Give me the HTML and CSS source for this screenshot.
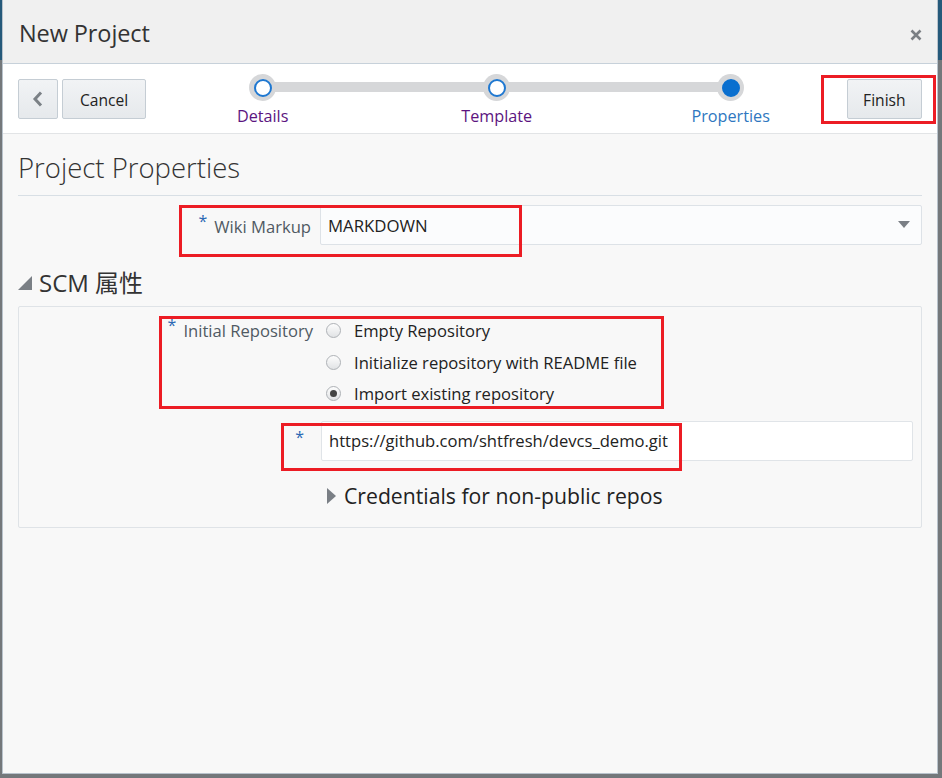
FILE: index.html
```html
<!DOCTYPE html>
<html lang="en">
<head>
<meta charset="utf-8">
<title>New Project</title>
<link rel="stylesheet" href="styles.css">
</head>
<body>
<div class="dialog">
  <header class="dlg-header">
    <h1 class="dlg-title">New Project</h1>
    <button class="close" aria-label="Close">
      <svg width="12" height="12" viewBox="0 0 12 12"><path d="M1.5 1.5 L10.5 10.5 M10.5 1.5 L1.5 10.5" stroke="#7b7f84" stroke-width="2.6" fill="none"/></svg>
    </button>
  </header>

  <div class="toolbar">
    <button class="btn btn-back" aria-label="Back">
      <svg width="12" height="16" viewBox="0 0 12 16"><path d="M9 1.5 L3 8 L9 14.5" stroke="#7b8186" stroke-width="3" fill="none"/></svg>
    </button>
    <button class="btn btn-cancel">Cancel</button>
    <ol class="train">
      <li class="step"><span class="dot"><span class="dot-inner"></span></span><span class="step-label">Details</span></li>
      <li class="step"><span class="dot"><span class="dot-inner"></span></span><span class="step-label">Template</span></li>
      <li class="step current"><span class="dot"><span class="dot-inner"></span></span><span class="step-label">Properties</span></li>
    </ol>
    <button class="btn btn-finish">Finish</button>
  </div>

  <main class="content">
    <h2 class="page-title">Project Properties</h2>

    <div class="form-row wiki-row">
      <label class="lbl"><span class="req">*</span>Wiki Markup</label>
      <div class="select">
        <span>MARKDOWN</span>
        <svg width="12" height="8" viewBox="0 0 12 8"><path d="M0 0 H12 L6 7 Z" fill="#7a7f85"/></svg>
      </div>
    </div>

    <h3 class="section">
      <svg width="14" height="14" viewBox="0 0 14 14"><path d="M14 0 V14 H0 Z" fill="#7a7f85"/></svg>
      <span>SCM 属性</span>
    </h3>

    <div class="group">
      <div class="form-row radio-row">
        <label class="lbl"><span class="req">*</span>Initial Repository</label>
        <div class="radios">
          <div class="radio"><span class="rb"></span><span>Empty Repository</span></div>
          <div class="radio"><span class="rb"></span><span>Initialize repository with README file</span></div>
          <div class="radio"><span class="rb checked"></span><span>Import existing repository</span></div>
        </div>
      </div>
      <div class="form-row url-row">
        <label class="lbl"><span class="req">*</span></label>
        <div class="input">https://github.com/shtfresh/devcs_demo.git</div>
      </div>
      <div class="form-row cred-row">
        <span class="lbl"></span>
        <div class="cred">
          <svg width="9" height="16" viewBox="0 0 9 16"><path d="M0 0 L9 8 L0 16 Z" fill="#7a7f85"/></svg>
          <span>Credentials for non-public repos</span>
        </div>
      </div>
    </div>
  </main>

  <div class="annot annot-finish"></div>
  <div class="annot annot-wiki"></div>
  <div class="annot annot-repo"></div>
  <div class="annot annot-url"></div>
</div>
</body>
</html>
```

FILE: styles.css
```css
* { box-sizing: border-box; }

html, body { height: 100%; }

body {
  margin: 0;
  background: linear-gradient(#25597a 0, #25597a 60px, #74787b 60px);
  font-family: "Open Sans", "Noto Sans CJK SC", sans-serif;
  color: #333;
  overflow: hidden;
}

.dialog {
  position: relative;
  margin-left: 2px;
  width: 936px;
  height: 774px;
  background: #f8f8f8;
  border: 1px solid #b9c3cc;
  border-top: 0;
  display: flex;
  flex-direction: column;
}

.dlg-header {
  height: 64px;
  flex: none;
  background: #f0f0f0;
  border-bottom: 1px solid #c7d1da;
  display: flex;
  align-items: center;
  justify-content: space-between;
  padding: 3px 14px 0 16px;
}

.dlg-title {
  margin: 0;
  font-size: 23.5px;
  font-weight: 400;
  color: #333;
  letter-spacing: -0.1px;
}

.close {
  border: 0;
  background: none;
  padding: 0;
  width: 14px;
  height: 14px;
  display: flex;
  align-items: center;
  justify-content: center;
  margin-top: 3px;
}

.toolbar {
  height: 70px;
  flex: none;
  background: #fff;
  border-bottom: 1px solid #e2e4e6;
  display: flex;
  align-items: flex-start;
  padding: 10px 15px 0 15px;
}

.btn {
  font-family: inherit;
  height: 40px;
  margin-top: 5px;
  border: 1px solid #c5cdd4;
  border-radius: 2px;
  background: linear-gradient(#f1f3f5, #e6e9ec);
  color: #222;
  font-size: 15.6px;
  padding: 1px 12px 0;
}

.btn-back {
  width: 41px;
  padding: 0;
  display: flex;
  align-items: center;
  justify-content: center;
}

.btn-cancel { margin-left: 4px; width: 84px; }
.btn-finish { width: 76px; margin-left: -1px; }

.train {
  list-style: none;
  margin: 0;
  padding: 0;
  display: flex;
  position: relative;
}

.train::before {
  content: "";
  position: absolute;
  left: 117px;
  right: 117px;
  top: 8px;
  height: 10px;
  background: #d6d7d9;
}

.step {
  width: 234px;
  display: flex;
  flex-direction: column;
  align-items: center;
  position: relative;
}

.dot {
  width: 27px;
  height: 27px;
  border-radius: 50%;
  background: #d6d7d9;
  display: flex;
  align-items: center;
  justify-content: center;
}

.dot-inner {
  width: 18px;
  height: 18px;
  border-radius: 50%;
  background: #fff;
  border: 2px solid #1f78d1;
}

.current .dot-inner {
  background: #0a6fcf;
  border-color: #0a6fcf;
}

.step-label {
  margin-top: 5px;
  font-size: 16.2px;
  line-height: 20px;
  color: #5c1480;
}

.current .step-label { color: #2e77c0; }

.content {
  flex: 1;
  padding: 0 15px;
  display: flex;
  flex-direction: column;
}

.page-title {
  margin: 0;
  padding-top: 14px;
  padding-bottom: 7px;
  font-size: 27.5px;
  line-height: 40px;
  font-weight: 300;
  color: #333;
  border-bottom: 1px solid #d8dfe5;
}

.form-row {
  display: flex;
  align-items: flex-start;
}

.lbl {
  width: 302px;
  flex: none;
  text-align: right;
  padding-right: 9px;
  font-size: 16.6px;
  color: #505a63;
  line-height: 22px;
}

.req {
  color: #2b69b4;
  font-size: 16px;
  line-height: 0;
  margin-right: 7px;
  vertical-align: 6px;
}

.wiki-row { margin-top: 9px; }

.wiki-row .lbl { padding-top: 11px; }

.select {
  flex: 1;
  height: 40px;
  background: #fbfcfd;
  border: 1px solid #dde2e7;
  border-radius: 2px;
  display: flex;
  align-items: center;
  justify-content: space-between;
  padding: 1px 11px 0 7px;
  font-size: 16.8px;
  color: #222;
}

.select svg { margin-top: -1px; }

.section {
  margin: 23px 0 0 0;
  display: flex;
  align-items: center;
  gap: 7px;
  font-size: 24px;
  font-weight: 400;
  line-height: 30px;
  color: #333;
}

.group {
  margin-top: 8px;
  border: 1px solid #dfe3e7;
  border-radius: 2px;
  padding: 8px 8px 17px 0;
  background: #f8f8f8;
}

.radio-row .lbl { padding-top: 5px; padding-right: 8px; }

.radios {
  display: flex;
  flex-direction: column;
}

.radio {
  display: flex;
  align-items: center;
  height: 31.5px;
  font-size: 16.6px;
  color: #222;
}

.rb {
  width: 15px;
  height: 15px;
  border-radius: 50%;
  border: 1px solid #aeb2b6;
  background: linear-gradient(#fdfdfd, #e1e3e5);
  margin-left: 5px;
  margin-right: 13px;
  display: flex;
  align-items: center;
  justify-content: center;
}

.rb.checked::after {
  content: "";
  width: 7px;
  height: 7px;
  border-radius: 50%;
  background: #444;
}

.url-row { margin-top: 11px; }

.url-row .lbl { padding-top: 11px; padding-right: 17px; }

.url-row .req { margin-right: 0; }

.input {
  flex: 1;
  height: 40px;
  background: #fff;
  border: 1px solid #e0e4e8;
  border-radius: 2px;
  display: flex;
  align-items: center;
  padding-left: 7px;
  font-size: 16.6px;
  color: #222;
}

.cred-row { margin-top: 21px; }

.cred {
  display: flex;
  align-items: center;
  gap: 8px;
  padding-left: 6px;
  font-size: 21.2px;
  line-height: 28px;
  color: #222;
}

.annot {
  position: absolute;
  border: 3px solid #ec1c24;
  pointer-events: none;
}

.annot-finish { left: 818px; top: 75px; width: 115px; height: 49px; }
.annot-wiki { left: 176px; top: 205px; width: 343px; height: 52px; }
.annot-repo { left: 156px; top: 316px; width: 505px; height: 93px; }
.annot-url { left: 278px; top: 423px; width: 401px; height: 48px; }
```
